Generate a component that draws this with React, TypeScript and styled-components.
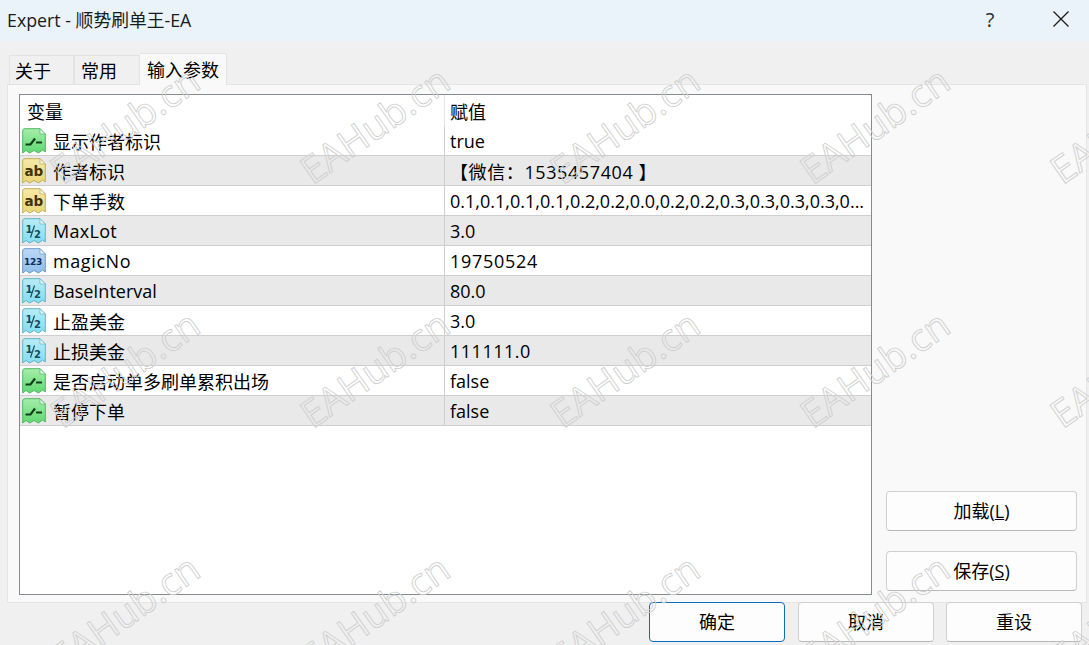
import React, { useId } from 'react';
import styled, { createGlobalStyle } from 'styled-components';

const GlobalStyle = createGlobalStyle`
    html, body {
        margin: 0;
        padding: 0;
        background: #f0f0f0;
    }
    * {
        box-sizing: border-box;
    }
`;

const Frame = styled.div`
    position: relative;
    width: 1089px;
    height: 645px;
    overflow: hidden;
    display: flex;
    flex-direction: column;
    background: #f0f0f0;
    color: #000;
    font-family: 'Open Sans', 'Noto Sans CJK SC', sans-serif;
    font-size: 18px;
`;

const TitleBar = styled.div`
    height: 41px;
    display: flex;
    align-items: center;
    padding: 0 20px 3px 7px;
    background: #eaf3f9;
    color: #1a1a1a;
    font-size: 17.8px;
`;

const Title = styled.div`
    flex: 1;
`;

const HelpGlyph = styled.div`
    width: 42px;
    margin-right: 42px;
    text-align: center;
    font-size: 20px;
    color: #333;
    font-family: 'Noto Sans', sans-serif;
`;

const CloseGlyph = styled.svg`
    width: 16px;
    height: 16px;
    stroke: #1a1a1a;
    stroke-width: 1.3;
    fill: none;
`;

const Tabs = styled.div`
    display: flex;
    align-items: flex-end;
    height: 44px;
    padding: 0 0 0 9px;
    margin-bottom: -1px;
    position: relative;
    z-index: 1;
`;

const Tab = styled.div<{ $active?: boolean; $w: number; $pad: number }>`
    width: ${(p) => p.$w}px;
    height: ${(p) => (p.$active ? 32 : 30)}px;
    display: flex;
    align-items: center;
    padding-left: ${(p) => p.$pad}px;
    padding-bottom: ${(p) => (p.$active ? 2 : 0)}px;
    background: ${(p) => (p.$active ? '#f9f9f9' : '#f0f0f0')};
    border: 1px solid #e3e3e3;
    border-bottom: ${(p) => (p.$active ? 'none' : '1px solid #e3e3e3')};
    border-left: ${(p) => (p.$active ? 'none' : '1px solid #e3e3e3')};
`;

const Panel = styled.div`
    height: 519px;
    margin: 0 2px 0 7px;
    padding: 9px 9px 6px 11px;
    display: flex;
    background: #f9f9f9;
    border: 1px solid #e5e5e5;
`;

const ListBox = styled.div`
    width: 853px;
    height: 501px;
    background: #fff;
    border: 1px solid #868a91;
`;

const Row = styled.div<{ $shade?: boolean; $header?: boolean }>`
    display: grid;
    grid-template-columns: 424px 1fr;
    height: ${(p) => (p.$header ? 31 : 30)}px;
    background: ${(p) => (p.$shade ? '#e9e9e9' : '#fff')};
    border-bottom: ${(p) => (p.$header ? 'none' : '1px solid #cfcfcf')};
`;

const NameCell = styled.div<{ $header?: boolean; $track?: number }>`
    display: flex;
    align-items: center;
    gap: 7px;
    padding-left: ${(p) => (p.$header ? 7 : 2)}px;
    white-space: nowrap;
    letter-spacing: ${(p) => p.$track ?? 0}px;
`;

const ValueCell = styled.div<{ $header?: boolean; $track?: number }>`
    display: flex;
    align-items: center;
    padding-left: 5px;
    border-left: 1px solid ${(p) => (p.$header ? '#e6e6e6' : '#cfcfcf')};
    white-space: nowrap;
    overflow: hidden;
    letter-spacing: ${(p) => p.$track ?? 0}px;
`;

const SidePanel = styled.div`
    flex: 1;
    display: flex;
    flex-direction: column;
    justify-content: flex-end;
    align-items: flex-end;
    gap: 20px;
    padding-bottom: 5px;
`;

const Button = styled.div<{ $primary?: boolean; $w: number }>`
    width: ${(p) => p.$w}px;
    height: 40px;
    display: flex;
    align-items: center;
    justify-content: center;
    padding: 0 0 3px 0;
    background: #fdfdfd;
    border: 1px solid ${(p) => (p.$primary ? '#0f6cbd' : '#d0d0d0')};
    border-bottom-color: ${(p) => (p.$primary ? '#0f6cbd' : '#b8b8b8')};
    border-radius: 4px;
    margin-right: ${(p) => (p.$primary ? 1 : 0)}px;
`;

const Footer = styled.div`
    display: flex;
    justify-content: flex-end;
    gap: 12px;
    padding: 0 7px 0 0;
    margin-top: -1px;
    position: relative;
`;

const Marks = styled.div`
    position: absolute;
    inset: 0;
    display: grid;
    grid-template-columns: repeat(5, 250px);
    grid-auto-rows: 244px;
    pointer-events: none;
    z-index: 2;
`;

const Mark = styled.div`
    display: flex;
    align-items: center;
    justify-content: center;
    font-family: 'Open Sans', sans-serif;
    font-size: 38px;
    white-space: nowrap;
    color: transparent;
    -webkit-text-stroke: 0.9px #cfcfcf;
    transform: translate(-1px, 2px) rotate(-35deg);
`;

type IconKind = 'bool' | 'text' | 'real' | 'int';

const iconColors: Record<IconKind, { top: string; bottom: string; edge: string; ink: string }> = {
    bool: { top: '#a6edab', bottom: '#5fd870', edge: '#52b862', ink: '#123f1c' },
    text: { top: '#f5e9a8', bottom: '#e8d678', edge: '#c4ae55', ink: '#3f3208' },
    real: { top: '#b8ecf5', bottom: '#84dcee', edge: '#5fb4cb', ink: '#154b5c' },
    int: { top: '#bcd9f5', bottom: '#8fbdec', edge: '#6a9acb', ink: '#102f55' },
};

const Icon: React.FC<{ kind: IconKind }> = ({ kind }) => {
    const id = useId();
    const { top, bottom, edge, ink } = iconColors[kind];
    return (
        <svg width="24" height="26" viewBox="0 0 24 26" style={{ flexShrink: 0 }}>
            <defs>
                <linearGradient id={id} x1="0" y1="0" x2="0" y2="1">
                    <stop offset="0" stopColor={top} />
                    <stop offset="1" stopColor={bottom} />
                </linearGradient>
            </defs>
            <path
                d="M0.7 3 Q0.7 0.7 3 0.7 H18 L23.3 6 V24 L20.5 22 L16.5 25 L12 22.5 L7.5 25 L4 22.5 L0.7 25 Z"
                fill={`url(#${id})`}
                stroke={edge}
                strokeWidth="1"
            />
            <path d="M18 0.7 V6 H23.3 Z" fill="#eef8f2" stroke={edge} strokeWidth="0.7" />
            {kind === 'bool' && (
                <path d="M3.5 16.5 H8.5 L13 10.5 M14 14.5 H20" fill="none" stroke={ink} strokeWidth="2.2" />
            )}
            {kind === 'text' && (
                <text x="2.4" y="18" fontFamily="'DejaVu Sans', sans-serif" fontWeight="700" fontSize="13.5" fill={ink}>
                    ab
                </text>
            )}
            {kind === 'real' && (
                <>
                    <path d="M12.5 7.5 L8.5 19.5" stroke={ink} strokeWidth="1.2" />
                    <text x="3.5" y="14.5" fontFamily="'DejaVu Sans', sans-serif" fontWeight="700" fontSize="10" fill={ink}>
                        1
                    </text>
                    <text x="12" y="19.5" fontFamily="'DejaVu Sans', sans-serif" fontWeight="700" fontSize="10" fill={ink}>
                        2
                    </text>
                </>
            )}
            {kind === 'int' && (
                <text x="2" y="17" fontFamily="'DejaVu Sans', sans-serif" fontWeight="700" fontSize="9" letterSpacing="-0.3" fill={ink}>
                    123
                </text>
            )}
        </svg>
    );
};

const params: { kind: IconKind; name: string; value: string; nameTrack?: number; valueTrack?: number }[] = [
    { kind: 'bool', name: '显示作者标识', value: 'true' },
    { kind: 'text', name: '作者标识', value: '【微信：1535457404 】', valueTrack: 0.6 },
    { kind: 'text', name: '下单手数', value: '0.1,0.1,0.1,0.1,0.2,0.2,0.0,0.2,0.2,0.3,0.3,0.3,0.3,0...' },
    { kind: 'real', name: 'MaxLot', value: '3.0', nameTrack: 0.3 },
    { kind: 'int', name: 'magicNo', value: '19750524', nameTrack: 0.6, valueTrack: 0.7 },
    { kind: 'real', name: 'BaseInterval', value: '80.0' },
    { kind: 'real', name: '止盈美金', value: '3.0' },
    { kind: 'real', name: '止损美金', value: '111111.0', valueTrack: 0.5 },
    { kind: 'bool', name: '是否启动单多刷单累积出场', value: 'false' },
    { kind: 'bool', name: '暂停下单', value: 'false' },
];

const App: React.FC = () => {
    return (
        <Frame>
            <GlobalStyle />
            <TitleBar>
                <Title>Expert - 顺势刷单王-EA</Title>
                <HelpGlyph>?</HelpGlyph>
                <CloseGlyph viewBox="0 0 16 16">
                    <path d="M0.5 0.5 L15.5 15.5 M15.5 0.5 L0.5 15.5" />
                </CloseGlyph>
            </TitleBar>
            <Tabs>
                <Tab $w={65} $pad={5}>关于</Tab>
                <Tab $w={66} $pad={6}>常用</Tab>
                <Tab $w={87} $pad={7} $active>输入参数</Tab>
            </Tabs>
            <Panel>
                <ListBox>
                    <Row $header>
                        <NameCell $header>变量</NameCell>
                        <ValueCell $header>赋值</ValueCell>
                    </Row>
                    {params.map((p, i) => (
                        <Row key={p.name} $shade={i % 2 === 1}>
                            <NameCell $track={p.nameTrack}>
                                <Icon kind={p.kind} />
                                {p.name}
                            </NameCell>
                            <ValueCell $track={p.valueTrack}>{p.value}</ValueCell>
                        </Row>
                    ))}
                </ListBox>
                <SidePanel>
                    <Button $w={191}>
                        <span>加载(<u>L</u>)</span>
                    </Button>
                    <Button $w={191}>
                        <span>保存(<u>S</u>)</span>
                    </Button>
                </SidePanel>
            </Panel>
            <Footer>
                <Button $w={136} $primary>确定</Button>
                <Button $w={136}>取消</Button>
                <Button $w={136}>重设</Button>
            </Footer>
            <Marks>
                {Array.from({ length: 15 }).map((_, i) => (
                    <Mark key={i}>EAHub.cn</Mark>
                ))}
            </Marks>
        </Frame>
    );
};

export default App;
